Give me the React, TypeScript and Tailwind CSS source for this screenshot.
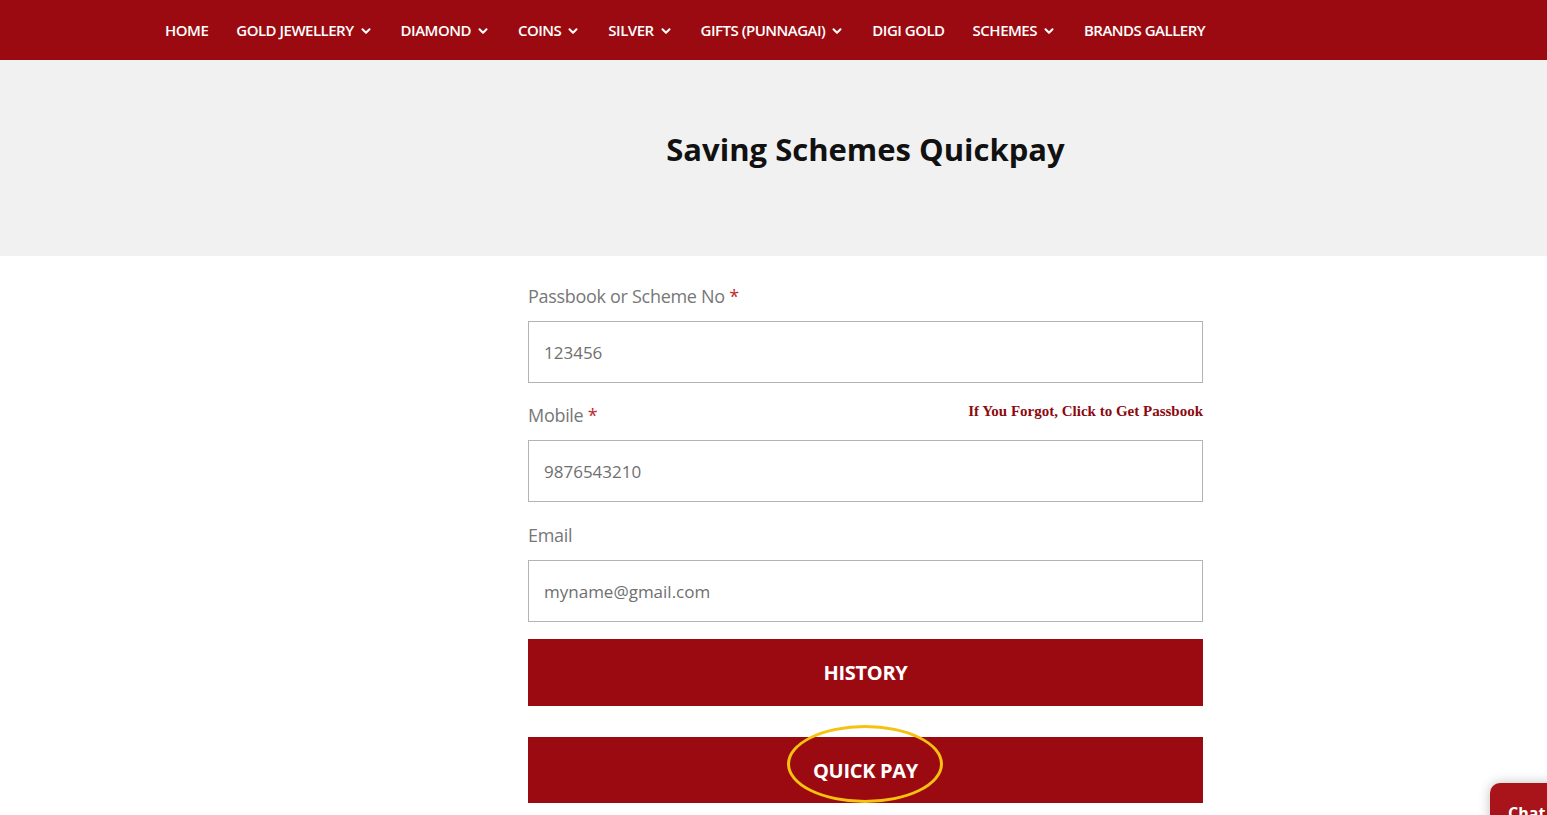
import { ChevronDown } from 'lucide-react';

const navItems = [
  { label: 'HOME', drop: false },
  { label: 'GOLD JEWELLERY', drop: true },
  { label: 'DIAMOND', drop: true },
  { label: 'COINS', drop: true },
  { label: 'SILVER', drop: true },
  { label: 'GIFTS (PUNNAGAI)', drop: true },
  { label: 'DIGI GOLD', drop: false },
  { label: 'SCHEMES', drop: true },
  { label: 'BRANDS GALLERY', drop: false },
];

export default function App() {
  return (
    <div className="relative min-h-[815px] bg-white font-['Open_Sans',sans-serif] overflow-hidden">
      {/* Top nav */}
      <nav className="h-[60px] bg-[#9b0a10] flex items-center pl-[165px] gap-[28px]">
        {navItems.map((item) => (
          <a key={item.label} className="flex items-center text-white text-[15px] font-semibold tracking-[-0.5px]">
            {item.label}
            {item.drop && <ChevronDown size={14} strokeWidth={3.5} className="ml-[5px] mt-[1px]" />}
          </a>
        ))}
      </nav>

      {/* Title band */}
      <div className="h-[196px] bg-[#f1f1f1] flex justify-center pl-[184px] pt-[69px]">
        <h1 className="text-[31px] font-bold text-[#111] leading-[1.3]">Saving Schemes Quickpay</h1>
      </div>

      {/* Form */}
      <div className="ml-[528px] w-[675px] pt-[27px]">
        <label className="block text-[18px] text-[#777] leading-[26px] tracking-[-0.3px]">
          Passbook or Scheme No <span className="text-[#c0272d]">*</span>
        </label>
        <input
          readOnly
          placeholder="123456"
          className="mt-[12px] w-full h-[62px] border border-[#b3b3b3] px-[15px] text-[17px] text-[#555] placeholder:text-[#6f6f6f] outline-none"
        />

        <div className="mt-[19px] flex items-center justify-between">
          <label className="block text-[18px] text-[#777] leading-[26px] tracking-[-0.3px]">
            Mobile <span className="text-[#c0272d]">*</span>
          </label>
          <a className="font-['Liberation_Serif',serif] font-bold text-[15px] text-[#8b0a0f] -mt-[8px]">
            If You Forgot, Click to Get Passbook
          </a>
        </div>
        <input
          readOnly
          placeholder="9876543210"
          className="mt-[12px] w-full h-[62px] border border-[#b3b3b3] px-[15px] text-[17px] text-[#555] placeholder:text-[#6f6f6f] outline-none"
        />

        <label className="mt-[20px] block text-[18px] text-[#777] leading-[26px] tracking-[-0.3px]">Email</label>
        <input
          readOnly
          placeholder="myname@gmail.com"
          className="mt-[12px] w-full h-[62px] border border-[#b3b3b3] px-[15px] text-[17px] text-[#555] placeholder:text-[#6f6f6f] outline-none"
        />

        <button className="mt-[17px] w-full h-[67px] bg-[#9b0a10] text-white text-[20px] font-bold tracking-[-0.3px]">
          HISTORY
        </button>

        <div className="relative mt-[31px]">
          <button className="w-full h-[66px] bg-[#9b0a10] text-white text-[20px] font-bold tracking-[-0.3px] pt-[2px]">
            QUICK PAY
          </button>
          <span className="absolute left-[259px] -top-[12px] w-[156px] h-[78px] rounded-[50%] border-[3px] border-[#f7c20f] pointer-events-none" />
        </div>
      </div>

      {/* Chat widget */}
      <div className="absolute left-[1490px] top-[783px] w-[80px] h-[60px] rounded-t-[10px] bg-[#a9131a] shadow-[0_0_12px_rgba(0,0,0,0.25)] pl-[18px] pt-[18px] text-white font-bold text-[16px]">
        Chat
      </div>
    </div>
  );
}
